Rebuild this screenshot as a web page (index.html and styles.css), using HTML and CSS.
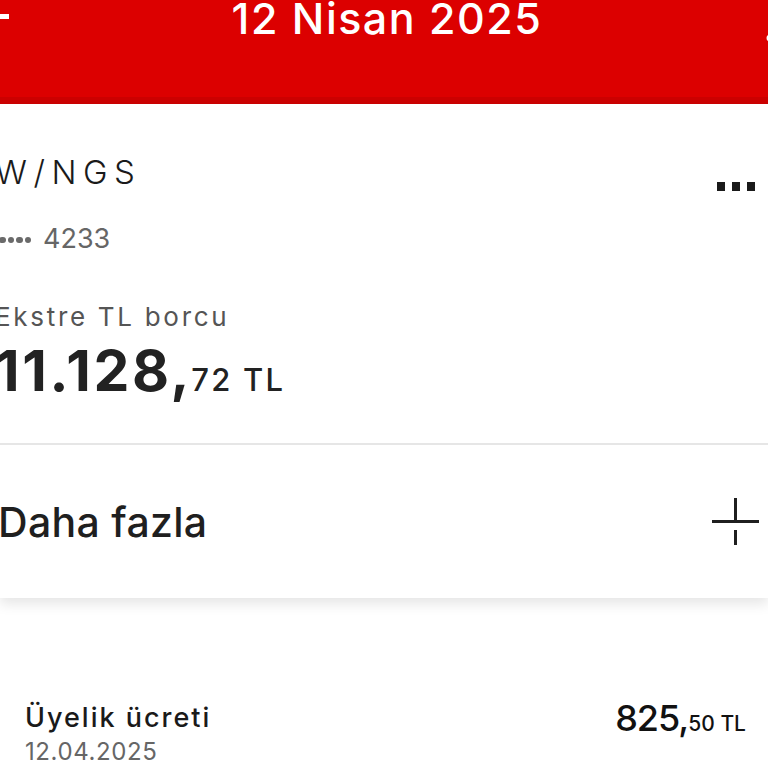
FILE: index.html
```html
<!DOCTYPE html>
<html lang="tr">
<head>
<meta charset="utf-8">
<link rel="stylesheet" href="styles.css">
</head>
<body>
<header class="topbar">
  <svg class="back" width="10" height="34" viewBox="0 0 10 34"><rect x="0" y="14" width="9" height="5" fill="#fff"/></svg>
  <h1 class="title">12 Nisan 2025</h1>
  <svg class="fwd" width="4" height="50" viewBox="0 0 4 50"><circle cx="6" cy="38" r="3.5" fill="#fff"/></svg>
</header>
<main class="card">
  <section class="summary">
    <div class="brand-row">
      <div class="brand">W/NGS</div>
      <div class="dots"><span></span><span></span><span></span></div>
    </div>
    <div class="cardno"><span class="mask"><i></i><i></i><i></i><i></i></span>4233</div>
    <div class="label">Ekstre TL borcu</div>
    <div class="amount"><span class="big">11.128,</span><span class="small">72 TL</span></div>
  </section>
  <section class="more">
    <div class="more-text">Daha fazla</div>
    <div class="plus"><span class="h"></span><span class="v1"></span><span class="v2"></span></div>
  </section>
</main>
<section class="list">
  <div class="item">
    <div class="item-left">
      <div class="item-title">Üyelik ücreti</div>
      <div class="item-date">12.04.2025</div>
    </div>
    <div class="item-amount"><span class="ibig">825,</span><span class="ismall">50 TL</span></div>
  </div>
</section>
</body>
</html>
```
FILE: styles.css
```css
html, body {
  margin: 0;
  padding: 0;
  background: #fff;
  width: 768px;
  height: 768px;
  overflow: hidden;
  font-family: "Inter", "Liberation Sans", sans-serif;
  color: #1f1f1f;
}
.topbar {
  height: 97px;
  background: #dc0000;
  border-bottom: 7px solid #cc0000;
  display: flex;
  justify-content: space-between;
  align-items: flex-start;
}
.back, .fwd { flex: none; }
.title {
  margin: 0;
  color: #fff;
  font-size: 43px;
  font-weight: 500;
  line-height: 36px;
  letter-spacing: 1.5px;
  height: 36px;
}
.card {
  background: #fff;
  box-shadow: 0 6px 12px rgba(0,0,0,0.10);
}
.summary {
  padding: 48px 0 0 0;
  box-sizing: border-box;
  border-bottom: 2px solid #e6e6e6;
  margin-left: -5px;
  height: 341px;
}
.brand-row {
  display: flex;
  justify-content: space-between;
  align-items: flex-start;
  height: 40px;
}
.brand {
  font-size: 33px;
  font-weight: 300;
  line-height: 40px;
  letter-spacing: 6.5px;
  color: #1a1a1a;
}
.dots {
  display: flex;
  gap: 7px;
  margin-top: 30px;
  margin-right: 13px;
}
.dots span {
  width: 8px;
  height: 9px;
  background: #1a1a1a;
  display: block;
}
.cardno {
  margin-top: 30px;
  height: 34px;
  font-size: 27px;
  line-height: 34px;
  color: #666;
  white-space: nowrap;
  display: flex;
  align-items: center;
}
.mask {
  display: inline-flex;
  gap: 2px;
  margin-left: 4px;
  margin-right: 12px;
  padding-top: 2px;
}
.mask i {
  display: block;
  width: 6.5px;
  height: 6.5px;
  border-radius: 50%;
  background: #6a6a6a;
}
.label {
  margin-top: 45px;
  height: 32px;
  font-size: 26px;
  line-height: 32px;
  color: #555;
  letter-spacing: 2.7px;
}
.amount {
  margin-top: 9px;
  height: 64px;
  line-height: 64px;
  color: #222;
  white-space: nowrap;
}
.big {
  font-size: 57px;
  font-weight: 700;
  letter-spacing: 2.7px;
  line-height: 1;
}
.small {
  font-size: 31px;
  font-weight: 500;
  margin-left: -1px;
  letter-spacing: 2.2px;
  line-height: 1;
}
.more {
  height: 153px;
  display: flex;
  align-items: center;
  justify-content: space-between;
  margin-left: -2px;
}
.more-text {
  font-size: 41px;
  font-weight: 500;
  color: #1f1f1f;
  letter-spacing: 0.3px;
}
.plus {
  width: 47px;
  height: 47px;
  position: relative;
  margin-right: 9px;
}
.plus span { position: absolute; background: #1f1f1f; display: block; }
.plus .h { left: 0; top: 22px; width: 47px; height: 3px; }
.plus .v1 { left: 22px; top: 0; width: 3px; height: 23px; }
.plus .v2 { left: 22px; top: 32px; width: 3px; height: 15px; }
.list {
  padding: 103px 22px 0 25px;
}
.item {
  display: flex;
  justify-content: space-between;
  align-items: flex-start;
}
.item-title {
  font-size: 27px;
  font-weight: 500;
  line-height: 34px;
  height: 34px;
  color: #1a1a1a;
  letter-spacing: 2px;
}
.item-date {
  margin-top: 1px;
  font-size: 24px;
  line-height: 32px;
  color: #666;
  letter-spacing: 0.6px;
}
.item-amount {
  margin-top: -1px;
  height: 40px;
  line-height: 40px;
  color: #111;
  white-space: nowrap;
}
.ibig { font-size: 36px; font-weight: 500; letter-spacing: -1px; line-height: 1; }
.ismall { font-size: 21px; font-weight: 500; line-height: 1; }
```
